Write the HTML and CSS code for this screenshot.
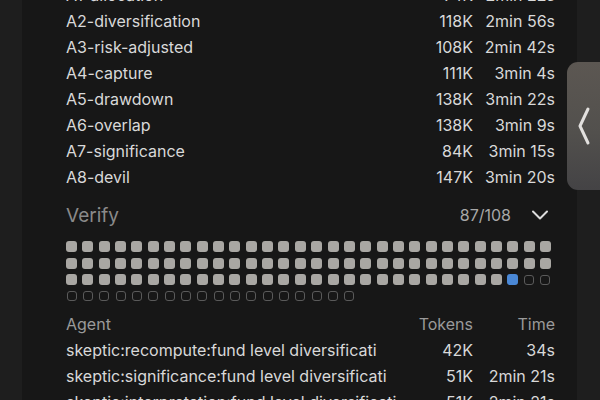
FILE: index.html
```html
<!DOCTYPE html>
<html lang="en">
<head>
    <meta charset="UTF-8">
    <meta name="viewport" content="width=device-width, initial-scale=1.0">
    <title>Run progress</title>
    <link rel="stylesheet" href="styles.css">
</head>
<body>
    <main class="panel">
        <section class="stages">
            <div class="row"><span class="name">A1-allocation</span><span class="num">74K</span><span class="num">2min 22s</span></div>
            <div class="row"><span class="name">A2-diversification</span><span class="num">118K</span><span class="num">2min 56s</span></div>
            <div class="row"><span class="name">A3-risk-adjusted</span><span class="num">108K</span><span class="num">2min 42s</span></div>
            <div class="row"><span class="name">A4-capture</span><span class="num">111K</span><span class="num">3min 4s</span></div>
            <div class="row"><span class="name">A5-drawdown</span><span class="num">138K</span><span class="num">3min 22s</span></div>
            <div class="row"><span class="name">A6-overlap</span><span class="num">138K</span><span class="num">3min 9s</span></div>
            <div class="row"><span class="name">A7-significance</span><span class="num">84K</span><span class="num">3min 15s</span></div>
            <div class="row"><span class="name">A8-devil</span><span class="num">147K</span><span class="num">3min 20s</span></div>
        </section>

        <section class="verify">
            <div class="verify-head">
                <span class="verify-title">Verify</span>
                <span class="verify-count">87/108</span>
                <svg class="chevron" width="18" height="10" viewBox="0 0 18 10">
                    <path d="M2 1.5 L9 8.5 L16 1.5" fill="none" stroke="#dcdcdc" stroke-width="2" stroke-linecap="round" stroke-linejoin="round"/>
                </svg>
            </div>
            <div class="cells" id="cells"></div>
        </section>

        <section class="agents">
            <div class="row head"><span class="name">Agent</span><span class="num">Tokens</span><span class="num">Time</span></div>
            <div class="row"><span class="name">skeptic:recompute:fund level diversificati</span><span class="num">42K</span><span class="num">34s</span></div>
            <div class="row"><span class="name">skeptic:significance:fund level diversificati</span><span class="num">51K</span><span class="num">2min 21s</span></div>
            <div class="row"><span class="name">skeptic:interpretation:fund level diversificati</span><span class="num">51K</span><span class="num">2min 21s</span></div>
        </section>
    </main>

    <div class="handle">
        <svg width="16" height="40" viewBox="0 0 16 40">
            <path d="M12 3 L4 20 L12 37" fill="none" stroke="#e2e0de" stroke-width="3" stroke-linecap="round" stroke-linejoin="round"/>
        </svg>
    </div>

    <script>
// 108 checks: 87 done, 1 running, the rest waiting
const total = 108, done = 87;
const cells = document.getElementById("cells");
for (let i = 0; i < total; i++) {
    const c = document.createElement("span");
    c.className = "cell " + (i < done ? "done" : i === done ? "running" : "waiting");
    cells.appendChild(c);
}
    </script>
</body>
</html>
```

FILE: styles.css
```css
body {
    margin: 0;
    padding: 0;
    height: 400px;
    overflow: hidden;
    background-color: #1e1e1e;
    font-family: Inter, "Noto Sans", sans-serif;
    color: #d9d9d9;
}

.panel {
    margin-left: 22px;
    width: 489px;
    height: 400px;
    padding: 0 22px 0 44px;
    background-color: #171717;
    overflow: hidden;
}

.stages {
    margin-top: -18px;
}

.row {
    display: grid;
    grid-template-columns: 1fr 70px 82px;
    height: 26px;
    line-height: 26px;
    font-size: 16px;
}

.row .name {
    white-space: nowrap;
    overflow: hidden;
}

.row .num {
    text-align: right;
    white-space: nowrap;
}

.row.head {
    color: #9a9a9a;
}

.verify {
    margin-top: 12px;
}

.verify-head {
    display: flex;
    align-items: center;
    height: 26px;
}

.verify-title {
    flex: 1;
    font-size: 19px;
    color: #8a8a8a;
}

.verify-count {
    font-size: 16px;
    color: #a8a8a8;
}

.chevron {
    margin-left: 20px;
    margin-right: 6px;
}

.cells {
    display: grid;
    grid-template-columns: repeat(30, 11px);
    column-gap: 5.35px;
    row-gap: 5.5px;
    margin-top: 13px;
}

.cell {
    width: 11px;
    height: 11px;
    border-radius: 3px;
    box-sizing: border-box;
}

.cell.done {
    background-color: #a9a7a3;
}

.cell.running {
    background-color: #4a88d6;
}

.cell.waiting {
    border: 1px solid #5a5a5a;
    width: 10px;
    height: 10px;
    margin: 0.5px;
}

.agents {
    margin-top: 9px;
}

.handle {
    position: absolute;
    top: 62px;
    left: 567px;
    width: 33px;
    height: 128px;
    border-radius: 11px 0 0 11px;
    background: linear-gradient(180deg, #5c5752 0%, #52504d 55%, #444345 100%);
    display: flex;
    align-items: center;
    padding-left: 9px;
    box-sizing: border-box;
}
```
